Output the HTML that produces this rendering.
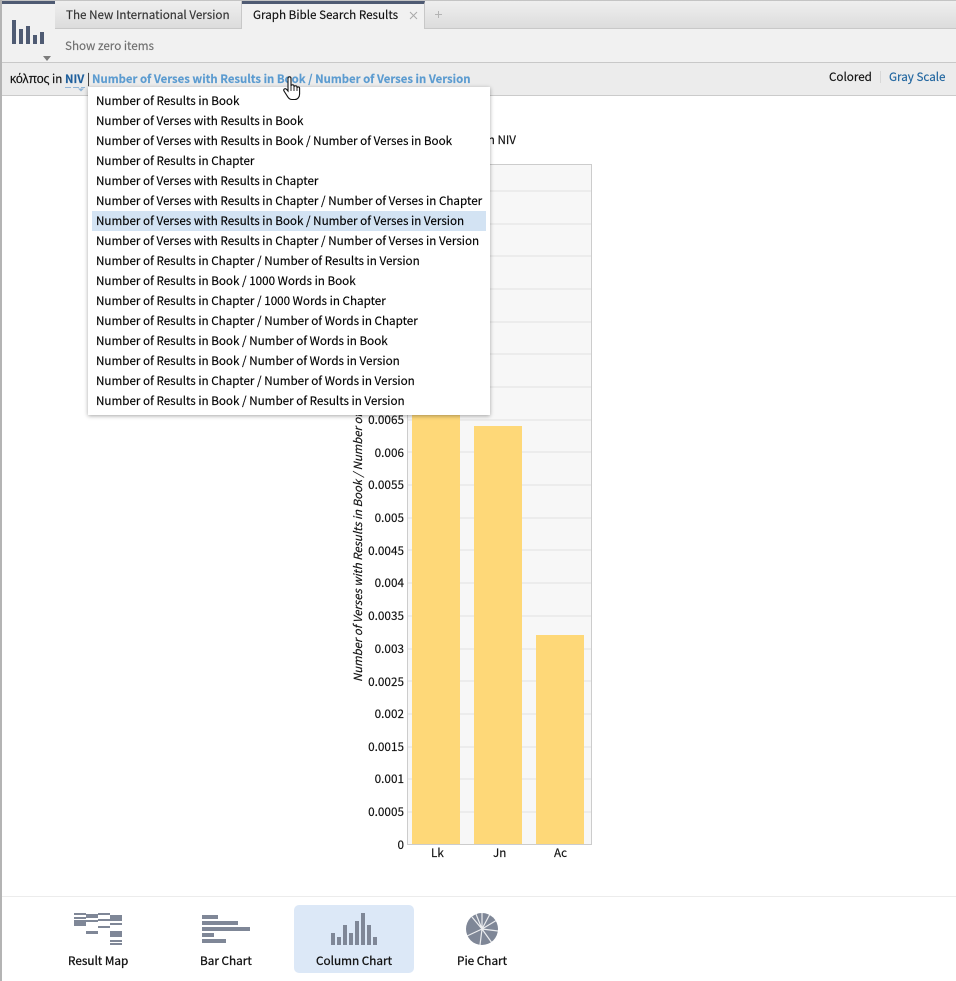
<!DOCTYPE html>
<html><head><meta charset="utf-8"><style>
html,body{margin:0;padding:0}
body{width:956px;height:981px;position:relative;overflow:hidden;background:#fff;font-family:"Noto Sans CJK JP","Liberation Sans",sans-serif;font-size:11.65px;color:#111;-webkit-text-stroke:.15px}
.a{position:absolute;white-space:nowrap}
.t{position:absolute;white-space:nowrap;line-height:18px}
.y{position:absolute;right:552px;line-height:16px;font-size:11.75px;text-align:right}
.g{position:absolute;left:408px;width:183px;height:2px;background:#ececec}
.bar{position:absolute;background:#fed878;width:48px}
.m{position:absolute;left:96px;line-height:19px;height:20px;white-space:nowrap;color:#000}
.b{font-size:11.75px;-webkit-text-stroke:.3px}
</style></head><body>
<div class="a" style="left:0;top:0;width:956px;height:28px;background:linear-gradient(#efefef,#dcdcdc);border-top:1px solid #c4c4c4;box-sizing:border-box"></div>
<div class="a" style="left:0;top:28px;width:956px;height:1px;background:#c8c8c8"></div>
<div class="a" style="left:0;top:29px;width:956px;height:33px;background:#f1f1f1"></div>
<div class="a" style="left:0;top:62px;width:956px;height:1px;background:#c8c8c8"></div>
<div class="a" style="left:0;top:63px;width:956px;height:32px;background:#ececec"></div>
<div class="a" style="left:0;top:95px;width:956px;height:1px;background:#cbcbcb"></div>
<div class="a" style="left:0;top:0;width:2px;height:981px;background:#b4b4b4"></div>

<div class="a" style="left:2px;top:1px;width:53px;height:61px;background:#f1f1f1;border-top:3px solid #4f5b73;box-sizing:border-box"></div>
<svg class="a" style="left:0;top:0" width="60" height="64"><g fill="#4f5b73"><rect x="12" y="20" width="4" height="24"/><rect x="19" y="29" width="4" height="15"/><rect x="26" y="26" width="4" height="18"/><rect x="33" y="35" width="4" height="9"/><rect x="40" y="32" width="4" height="12"/></g><path d="M43 56h8l-4 5z" fill="#7c7c7c"/></svg>

<div class="a" style="left:241px;top:1px;width:184px;height:28px;background:#f1f1f1;border-top:3px solid #4f5b73;border-right:1px solid #c8c8c8;box-sizing:border-box"></div>
<div class="a" style="left:241px;top:1px;width:1px;height:28px;background:#c8c8c8"></div>
<div class="t" style="left:66px;top:6px;color:#333">The New International Version</div>
<div class="t" style="left:253px;top:6px;color:#111">Graph Bible Search Results</div>
<svg class="a" style="left:409px;top:11px" width="9" height="9"><path d="M1 1l7 7M8 1l-7 7" stroke="#aaa" stroke-width="1" fill="none"/></svg>
<svg class="a" style="left:434px;top:10px" width="9" height="9"><path d="M4.5 1v7M1 4.5h7" stroke="#b4b4b4" stroke-width="1" fill="none"/></svg>
<div class="t" style="left:65px;top:37px;color:#6f6f6f">Show zero items</div>

<div class="t" style="left:10px;top:70px;color:#111;font-family:'Liberation Sans',sans-serif;font-size:12.5px;letter-spacing:-.2px">κόλπος</div>
<div class="t" style="left:52px;top:70px;color:#111">in</div>
<div class="t" style="left:65px;top:70px;color:#1f5f9c;font-weight:700;font-size:11.34px">NIV</div>
<svg class="a" style="left:64px;top:86px" width="24" height="6"><path d="M1 1.5h6M9 1.5h6M17 1.5h4" stroke="#8fb4d6" stroke-width="1" fill="none"/><path d="M14 2.5h6l-3 3z" fill="#8fb4d6"/></svg>
<div class="t" style="left:87px;top:70px;color:#222">|</div>
<div class="t" style="left:92px;top:70px;color:#5b9bd0;font-weight:700;font-size:11.34px">Number of Verses with Results in Book / Number of Verses in Version</div>
<div class="t" style="left:829px;top:68px;color:#111">Colored</div>
<div class="a" style="left:880px;top:71px;width:1px;height:12px;background:#d8d8d8"></div>
<div class="t" style="left:889px;top:68px;color:#20659f">Gray Scale</div>

<div class="t" style="left:300px;top:131px;width:216px;text-align:right;color:#111">n NIV</div>
<div class="a" style="left:407px;top:164px;width:185px;height:681px;background:#f7f7f7;border:1px solid #ccc;box-sizing:border-box"></div>
<div class="g" style="top:190px"></div><div class="g" style="top:223px"></div><div class="g" style="top:255px"></div><div class="g" style="top:288px"></div><div class="g" style="top:321px"></div><div class="g" style="top:353px"></div><div class="g" style="top:386px"></div><div class="g" style="top:419px"></div><div class="g" style="top:451px"></div><div class="g" style="top:484px"></div><div class="g" style="top:517px"></div><div class="g" style="top:549px"></div><div class="g" style="top:582px"></div><div class="g" style="top:615px"></div><div class="g" style="top:648px"></div><div class="g" style="top:680px"></div><div class="g" style="top:713px"></div><div class="g" style="top:746px"></div><div class="g" style="top:778px"></div><div class="g" style="top:811px"></div>
<div class="bar" style="left:412px;top:300px;height:544px"></div>
<div class="bar" style="left:474px;top:426px;height:418px"></div>
<div class="bar" style="left:536px;top:635px;height:209px"></div>

<div class="y" style="top:412px">0.0065</div>
<div class="y" style="top:445px">0.006</div>
<div class="y" style="top:477px">0.0055</div>
<div class="y" style="top:510px">0.005</div>
<div class="y" style="top:543px">0.0045</div>
<div class="y" style="top:575px">0.004</div>
<div class="y" style="top:608px">0.0035</div>
<div class="y" style="top:641px">0.003</div>
<div class="y" style="top:674px">0.0025</div>
<div class="y" style="top:706px">0.002</div>
<div class="y" style="top:739px">0.0015</div>
<div class="y" style="top:771px">0.001</div>
<div class="y" style="top:804px">0.0005</div>
<div class="y" style="top:837px">0</div>
<div class="t" style="left:431px;top:844px">Lk</div>
<div class="t" style="left:493px;top:844px">Jn</div>
<div class="t" style="left:554px;top:844px">Ac</div>
<div class="a" style="left:358px;top:682px;line-height:16px;font-size:11.35px;font-style:italic;transform-origin:0 0;transform:rotate(-90deg) translateY(-8px);color:#111">Number of Verses with Results in Book / Number of Verses in Version</div>

<div class="a" style="left:88px;top:87px;width:402px;height:328px;background:#fff;box-shadow:0 1px 4px rgba(0,0,0,.35)"></div>
<div class="a" style="left:92px;top:211px;width:394px;height:20px;background:#d3e3f3"></div>
<div class="m" style="top:91px">Number of Results in Book</div>
<div class="m" style="top:111px">Number of Verses with Results in Book</div>
<div class="m" style="top:131px">Number of Verses with Results in Book / Number of Verses in Book</div>
<div class="m" style="top:151px">Number of Results in Chapter</div>
<div class="m" style="top:171px">Number of Verses with Results in Chapter</div>
<div class="m" style="top:191px">Number of Verses with Results in Chapter / Number of Verses in Chapter</div>
<div class="m" style="top:211px">Number of Verses with Results in Book / Number of Verses in Version</div>
<div class="m" style="top:231px">Number of Verses with Results in Chapter / Number of Verses in Version</div>
<div class="m" style="top:251px">Number of Results in Chapter / Number of Results in Version</div>
<div class="m" style="top:271px">Number of Results in Book / 1000 Words in Book</div>
<div class="m" style="top:291px">Number of Results in Chapter / 1000 Words in Chapter</div>
<div class="m" style="top:311px">Number of Results in Chapter / Number of Words in Chapter</div>
<div class="m" style="top:331px">Number of Results in Book / Number of Words in Book</div>
<div class="m" style="top:351px">Number of Results in Book / Number of Words in Version</div>
<div class="m" style="top:371px">Number of Results in Chapter / Number of Words in Version</div>
<div class="m" style="top:391px">Number of Results in Book / Number of Results in Version</div>

<svg class="a" style="left:281px;top:74px" width="20" height="28"><path d="M7 4.5c0-2.2 3-2.2 3 0V12c0-1.6 3-1.6 3 0v1c0-1.6 3-1.6 3 0v1c0-1.4 2.6-1.4 2.6.2V20c0 3-2 5.5-4.6 5.5H11c-2 0-3.2-1-4.2-2.6L3 17c-1-1.8 1.2-3.2 2.6-1.6L7 17z" fill="#fff" stroke="#111" stroke-width="1.1"/><path d="M10 12v5M13 13v4M16 14v3" stroke="#111" stroke-width=".9" fill="none"/></svg>

<div class="a" style="left:2px;top:896px;width:954px;height:1px;background:#ececec"></div>
<div class="a" style="left:294px;top:905px;width:120px;height:68px;background:#dce8f7;border-radius:5px"></div>
<svg class="a" style="left:0;top:900px" width="520" height="60"><g fill="#7f8797" transform="translate(0,-900)">
<rect x="74" y="913" width="12" height="2"/><rect x="74" y="917" width="12" height="2"/><rect x="74" y="920" width="12" height="6"/>
<rect x="86" y="914" width="12" height="4"/><rect x="86" y="920" width="12" height="2"/><rect x="86" y="931" width="12" height="3"/>
<rect x="98" y="913" width="12" height="2"/><rect x="98" y="919" width="12" height="2"/><rect x="98" y="926" width="12" height="2"/>
<rect x="110" y="915" width="12" height="6"/><rect x="110" y="923" width="12" height="2"/><rect x="110" y="931" width="12" height="6"/><rect x="110" y="940" width="12" height="2"/><rect x="110" y="943" width="12" height="2"/>
<rect x="202" y="915" width="16" height="4"/><rect x="202" y="921" width="36" height="4"/><rect x="202" y="927" width="48" height="4"/><rect x="202" y="933" width="12" height="4"/><rect x="202" y="939" width="24" height="4"/>
<rect x="331" y="933" width="4" height="12"/><rect x="337" y="937" width="4" height="8"/><rect x="343" y="925" width="4" height="20"/><rect x="349" y="933" width="4" height="12"/><rect x="355" y="921" width="4" height="24"/><rect x="361" y="913" width="4" height="32"/><rect x="367" y="925" width="4" height="20"/><rect x="373" y="937" width="4" height="8"/>
<circle cx="482" cy="929" r="16"/></g>
<g stroke="#fff" stroke-width="1.2" opacity=".85" transform="translate(0,-900)"><path d="M482 929L482 913M482 929L490 914M482 929L497 920M482 929L498 931M482 929L492 943M482 929L480 945M482 929L467 936M482 929L472 917M482 929L476 914"/></g></svg>
<div class="t b" style="left:68px;top:952px">Result Map</div>
<div class="t b" style="left:200px;top:952px">Bar Chart</div>
<div class="t b" style="left:316px;top:952px">Column Chart</div>
<div class="t b" style="left:457px;top:952px">Pie Chart</div>
</body></html>
